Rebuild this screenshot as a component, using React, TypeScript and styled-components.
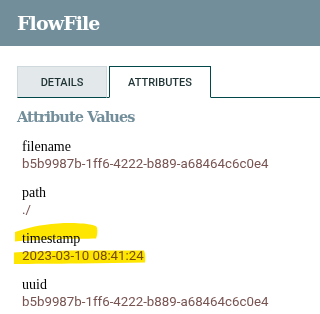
import * as React from "react";
import styled, { createGlobalStyle } from "styled-components";

const GlobalStyle = createGlobalStyle`
  html, body {
    margin: 0;
    padding: 0;
    background: #ffffff;
  }
  body {
    font-family: Roboto, "Liberation Sans", sans-serif;
  }
`;

const Page = styled.div`
  width: 320px;
  height: 314px;
  overflow: hidden;
  background: #ffffff;
`;

const Header = styled.div`
  height: 46px;
  background: #728e9b;
  display: flex;
  align-items: center;
  padding-left: 17px;
`;

const Title = styled.h1`
  margin: 0;
  color: #ffffff;
  font-family: "DejaVu Serif", "Liberation Serif", serif;
  font-weight: bold;
  font-size: 19px;
  letter-spacing: -0.9px;
  line-height: 22px;
`;

const TabBar = styled.div`
  display: flex;
  gap: 2px;
  margin: 20px 0 0 17px;
  border-bottom: 1px solid #004849;
`;

const Tab = styled.div<{ $active?: boolean }>`
  width: ${(p) => (p.$active ? "102px" : "90px")};
  height: 32px;
  display: flex;
  align-items: center;
  justify-content: center;
  box-sizing: border-box;
  margin-bottom: -1px;
  background: ${(p) => (p.$active ? "#ffffff" : "#e3e8eb")};
  border: 1px solid ${(p) => (p.$active ? "#004849" : "#cfd8dc")};
  border-bottom: 1px solid ${(p) => (p.$active ? "#ffffff" : "#004849")};
  font-family: Roboto, "Liberation Sans", sans-serif;
  font-size: 11px;
  font-weight: 500;
  color: #1f3335;
`;

const Content = styled.div`
  padding: 9px 0 0 17px;
`;

const SectionTitle = styled.h2`
  margin: 0 0 11px;
  color: #728e9b;
  font-family: "DejaVu Serif", "Liberation Serif", serif;
  font-weight: bold;
  font-size: 14.5px;
  letter-spacing: -0.9px;
  line-height: 20px;
`;

const List = styled.div`
  display: flex;
  flex-direction: column;
  gap: 12px;
  padding-left: 5px;
`;

const Item = styled.div`
  position: relative;
`;

const Name = styled.div`
  font-family: "Liberation Serif", serif;
  font-size: 14px;
  line-height: 17px;
  color: #000000;
`;

const Value = styled.div`
  font-family: Roboto, "Liberation Sans", sans-serif;
  font-size: 13.3px;
  line-height: 17px;
  color: #775351;
`;

const Marker = styled.svg`
  position: absolute;
  left: -9px;
  top: -8px;
  width: 136px;
  height: 44px;
  mix-blend-mode: multiply;
  pointer-events: none;
`;

const attributes = [
  { name: "filename", value: "b5b9987b-1ff6-4222-b889-a68464c6c0e4" },
  { name: "path", value: "./" },
  { name: "timestamp", value: "2023-03-10 08:41:24", marked: true },
  { name: "uuid", value: "b5b9987b-1ff6-4222-b889-a68464c6c0e4" },
];

const Highlight = () => (
  <Marker viewBox="0 0 136 44">
    <path
      d="M2 10 C12 7 20 4.5 27 3.5 C38 2 46 1 54 1 C64 1 72 1.5 77 2.5 C81 3.2 84 4 84 6 C85 10 84 14 83 16.5 C72 16.8 64 16.8 57 16.8 C44 17.2 34 17.8 27 18 C16 18.4 8 18.8 2 19.5 Z"
      fill="#ffe600"
    />
    <path
      d="M1 30.5 C20 29.5 45 28.8 67 28.6 C95 28.4 115 28.4 131 28.5 C132.5 32 132.5 37 132 40.5 C110 41 90 41.3 67 41.5 C40 41.7 20 41.9 1 42 Z"
      fill="#ffe600"
    />
  </Marker>
);

export default function App() {
  return (
    <Page>
      <GlobalStyle />
      <Header>
        <Title>FlowFile</Title>
      </Header>
      <TabBar>
        <Tab>DETAILS</Tab>
        <Tab $active>ATTRIBUTES</Tab>
      </TabBar>
      <Content>
        <SectionTitle>Attribute Values</SectionTitle>
        <List>
          {attributes.map((a) => (
            <Item key={a.name}>
              <Name>{a.name}</Name>
              <Value>{a.value}</Value>
              {a.marked && <Highlight />}
            </Item>
          ))}
        </List>
      </Content>
    </Page>
  );
}
